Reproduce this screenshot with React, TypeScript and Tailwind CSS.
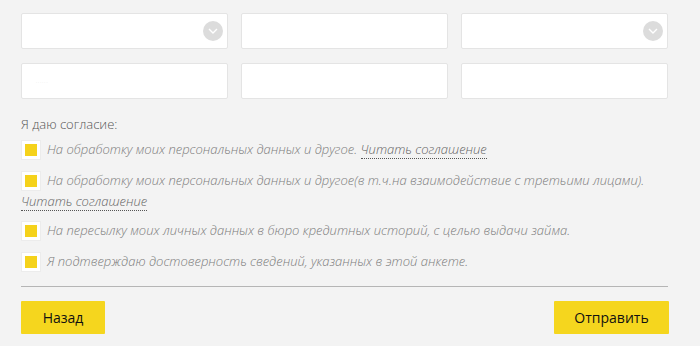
import React from 'react';

const font = { fontFamily: '"Open Sans", "Noto Sans", sans-serif' };

const Select: React.FC = () => (
  <div className="relative h-[36px] rounded-[2px] border border-[#e4e4e4] bg-white">
    <span className="absolute right-[4px] top-[7px] flex h-[20px] w-[20px] items-center justify-center rounded-full bg-[#dcdcdc]">
      <svg width="10" height="6" viewBox="0 0 10 6" fill="none">
        <path d="M1 1l4 4 4-4" stroke="#fff" strokeWidth="1.4" />
      </svg>
    </span>
  </div>
);

const Input: React.FC<{ dots?: boolean }> = ({ dots }) => (
  <div className="relative h-[36px] rounded-[2px] border border-[#e4e4e4] bg-white">
    {dots && <span className="absolute left-[14px] top-[16px] text-[4px] text-[#ddd]">· · · · · ·</span>}
  </div>
);

const Box: React.FC = () => (
  <span className="mt-[1px] flex h-[20px] w-[20px] shrink-0 items-center justify-center border border-[#ececec] bg-white">
    <span className="h-[12px] w-[12px] bg-[#f5d21a]" />
  </span>
);

const Link: React.FC<{ children: React.ReactNode }> = ({ children }) => (
  <span className="border-b border-dotted border-[#555] text-[#666]">{children}</span>
);

export default function App() {
  return (
    <div className="h-[346px] w-[700px] bg-[#f3f3f3] px-[21px] pt-[13px]" style={font}>
      <div className="grid w-[647px] grid-cols-3 gap-x-[13px] gap-y-[14px]">
        <Select />
        <Input />
        <Select />
        <Input dots />
        <Input />
        <Input />
      </div>

      <div className="mt-[15px] text-[13px] font-light italic text-[#7d7d7d]">
        <div className="mb-[5px] leading-[20px] not-italic text-[#555]">Я даю согласие:</div>
        <div className="flex items-start gap-[6px] leading-[20px]">
          <Box />
          <div>
            На обработку моих персональных данных и другое. <Link>Читать соглашение</Link>
          </div>
        </div>
        <div className="mt-[10px] leading-[20px]">
          <div className="flex items-start gap-[6px]">
            <Box />
            <div>На обработку моих персональных данных и другое(в т.ч.на взаимодействие с третьими лицами).</div>
          </div>
          <div>
            <Link>Читать соглашение</Link>
          </div>
        </div>
        <div className="mt-[9px] flex items-start gap-[6px] leading-[20px]">
          <Box />
          <div>На пересылку моих личных данных в бюро кредитных историй, с целью выдачи займа.</div>
        </div>
        <div className="mt-[10px] flex items-start gap-[6px] leading-[20px]">
          <Box />
          <div>Я подтверждаю достоверность сведений, указанных в этой анкете.</div>
        </div>
      </div>

      <div className="mt-[14px] w-[647px] border-t border-[#b5b5b5]" />

      <div className="mt-[14px] flex w-[648px] justify-between">
        <button className="h-[33px] w-[84px] rounded-[1px] bg-[#f5d61e] text-[14px] text-[#111]">Назад</button>
        <button className="h-[33px] w-[115px] rounded-[1px] bg-[#f5d61e] text-[14px] text-[#111]">Отправить</button>
      </div>
    </div>
  );
}
